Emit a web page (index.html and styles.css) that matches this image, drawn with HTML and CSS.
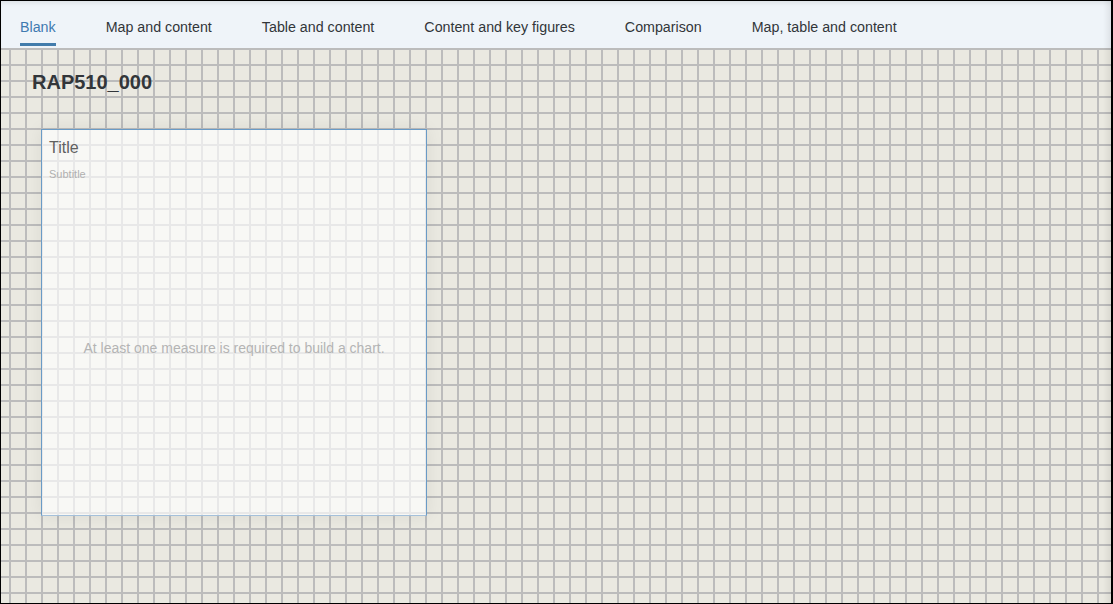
FILE: index.html
```html
<!DOCTYPE html>
<html>
<head>
<meta charset="utf-8">
<link rel="stylesheet" href="styles.css">
</head>
<body>
<div class="frame">
  <nav class="tabs">
    <div class="tab active">Blank</div>
    <div class="tab">Map and content</div>
    <div class="tab">Table and content</div>
    <div class="tab">Content and key figures</div>
    <div class="tab">Comparison</div>
    <div class="tab">Map, table and content</div>
  </nav>
  <main class="canvas">
    <h1 class="page-title">RAP510_000</h1>
    <section class="card">
      <div class="card-title">Title</div>
      <div class="card-subtitle">Subtitle</div>
      <div class="card-empty">At least one measure is required to build a chart.</div>
    </section>
  </main>
</div>
</body>
</html>
```
FILE: styles.css
```css
html, body {
  margin: 0;
  padding: 0;
}
body {
  width: 1113px;
  height: 604px;
  overflow: hidden;
  font-family: "Liberation Sans", Arial, sans-serif;
}
.frame {
  box-sizing: border-box;
  width: 1113px;
  height: 604px;
  border: 1px solid #000;
  border-right-width: 2px;
  display: flex;
  flex-direction: column;
  position: relative;
  overflow: hidden;
}
.frame::after {
  content: "";
  position: absolute;
  top: 0;
  right: 0;
  bottom: 0;
  width: 8px;
  background: linear-gradient(to right, rgba(0,0,0,0), rgba(0,0,0,0.07));
  pointer-events: none;
}
.tabs {
  height: 47px;
  flex: none;
  background: #eff4f9;
  box-shadow: inset 0 4px 4px -2px rgba(0,0,0,0.08);
  display: flex;
  align-items: stretch;
  padding-left: 19px;
  gap: 50px;
  box-sizing: border-box;
}
.tab {
  font-size: 14.25px;
  color: #32363a;
  padding-top: 18px;
  box-sizing: border-box;
  height: 47px;
  border-bottom: 3px solid transparent;
}
.tab.active {
  color: #3f7ab0;
  border-bottom: 3px solid #427cac;
  height: 45px;
}
.canvas {
  flex: 1;
  background-color: #eae9e1;
  background-image:
    linear-gradient(to right, #bcbcbc 0, #bcbcbc 2px, transparent 2px),
    linear-gradient(to bottom, #bcbcbc 0, #bcbcbc 2px, transparent 2px);
  background-size: 16px 16px, 16px 16px;
  background-position: 8px 0, 0 0;
  padding: 22px 0 0 31px;
  display: flex;
  flex-direction: column;
  align-items: flex-start;
}
.page-title {
  margin: 0;
  font-size: 20px;
  line-height: 24px;
  font-weight: bold;
  color: #32363a;
}
.card {
  margin: 35px 0 0 9px;
  width: 386px;
  height: 387px;
  box-sizing: border-box;
  border: 1px solid #6a9bc6;
  border-bottom-color: #a4c0da;
  background: rgba(255,255,255,0.66);
  box-shadow: 0 0 16px rgba(0,0,0,0.07);
  display: flex;
  flex-direction: column;
  padding: 9px 0 0 7px;
}
.card-title {
  font-size: 16px;
  line-height: 18px;
  color: #606060;
}
.card-subtitle {
  font-size: 11px;
  line-height: 13px;
  color: #b0b0b0;
  margin-top: 11px;
}
.card-empty {
  margin-top: 159px;
  margin-left: -7px;
  text-align: center;
  font-size: 14px;
  color: #b4b4b4;
}
```
